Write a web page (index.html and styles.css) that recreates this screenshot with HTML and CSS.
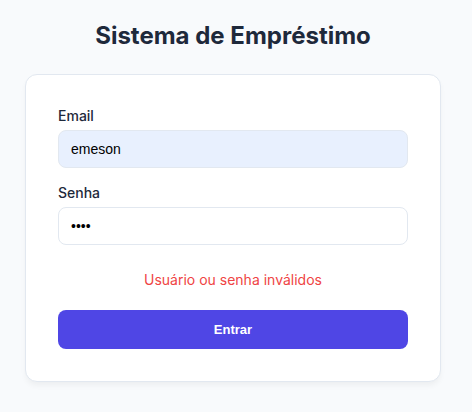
FILE: index.html
```html
<!DOCTYPE html>
<html lang="pt-BR">
<head>
<meta charset="utf-8">
<meta name="viewport" content="width=device-width, initial-scale=1">
<title>Sistema de Empréstimo</title>
<link rel="stylesheet" href="styles.css">
</head>
<body>
<main class="login">
  <h1 class="title">Sistema de Empréstimo</h1>
  <form class="card">
    <div class="field">
      <label for="email">Email</label>
      <input class="autofilled" id="email" type="text" value="emeson">
    </div>
    <div class="field">
      <label for="senha">Senha</label>
      <input id="senha" type="password" value="1234">
    </div>
    <p class="error" role="alert">Usuário ou senha inválidos</p>
    <button class="submit" type="submit">Entrar</button>
  </form>
</main>
</body>
</html>
```

FILE: styles.css
```css
* {
  box-sizing: border-box;
}

body {
  margin: 0;
  min-height: 100vh;
  background: #f8fafc;
  color: #1e293b;
  font-family: Inter, sans-serif;
}

.login {
  max-width: 480px;
  margin: 0 auto;
  padding: 16px 31px 16px 25px;
}

.title {
  margin: 0 0 18px;
  font-size: 24px;
  line-height: 40px;
  font-weight: 700;
  text-align: center;
}

.card {
  padding: 32px;
  border: 1px solid #e2e8f0;
  border-radius: 12px;
  background: #fff;
  box-shadow: 0 4px 6px -1px rgba(0, 0, 0, 0.05);
}

.field {
  display: flex;
  flex-direction: column;
  gap: 5px;
  margin-bottom: 16px;
}

.field label {
  font-size: 14px;
  line-height: 18px;
  font-weight: 500;
}

.field input {
  width: 100%;
  height: 38px;
  padding: 0 12px;
  border: 1px solid #e2e8f0;
  border-radius: 8px;
  background: #fff;
  color: #000;
  font-family: "Liberation Sans", Arial, sans-serif;
  font-size: 14px;
}

.field .autofilled {
  background: #e8f0fe;
}

.error {
  margin: 24px 0 19px;
  color: #ef4444;
  font-size: 14px;
  line-height: 22px;
  text-align: center;
}

.submit {
  display: block;
  width: 100%;
  height: 39px;
  border: 0;
  border-radius: 8px;
  background: #4f46e5;
  color: #fff;
  font-family: "Liberation Sans", Arial, sans-serif;
  font-size: 13px;
  font-weight: 700;
}
```
